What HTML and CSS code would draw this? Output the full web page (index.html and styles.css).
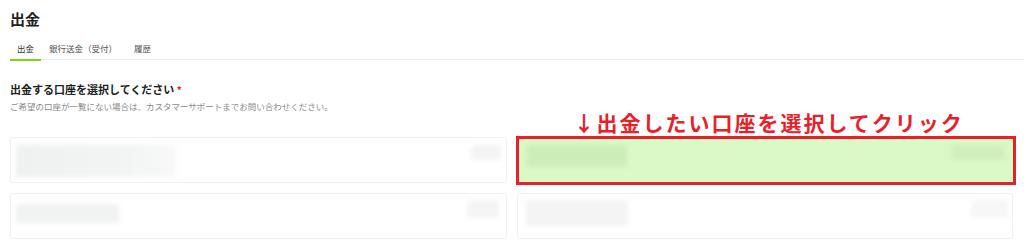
FILE: index.html
```html
<!DOCTYPE html>
<html lang="ja">
<head>
<meta charset="utf-8">
<title>出金</title>
<link rel="stylesheet" href="styles.css">
</head>
<body>
<h1 class="title">出金</h1>
<nav class="tabs">
  <span class="tab active">出金</span>
  <span class="tab">銀行送金（受付）</span>
  <span class="tab">履歴</span>
</nav>
<section class="select">
  <h2 class="heading">出金する口座を選択してください <span class="req">*</span></h2>
  <p class="note">ご希望の口座が一覧にない場合は、カスタマーサポートまでお問い合わせください。</p>
</section>
<div class="grid">
  <div class="card">
    <div class="blk b1"></div>
    <div class="blk s1"></div>
  </div>
  <div class="card selected">
    <div class="blk b2"></div>
    <div class="blk s2"></div>
    <div class="mark"></div>
    <div class="callout">↓出金したい口座を選択してクリック</div>
  </div>
  <div class="card">
    <div class="blk b3"></div>
    <div class="blk s3"></div>
  </div>
  <div class="card">
    <div class="blk b4"></div>
    <div class="blk s4"></div>
  </div>
</div>
</body>
</html>
```

FILE: styles.css
```css
html, body {
  margin: 0;
  background: #fff;
}
body {
  padding: 0 11px 0 10px;
  font-family: "Noto Sans CJK JP", "Noto Sans", sans-serif;
  color: #222;
  height: 247px;
  overflow: hidden;
}
.title {
  margin: 9px 0 0;
  font-size: 15px;
  line-height: 20px;
  font-weight: 700;
}
.tabs {
  display: flex;
  margin: 11px -11px 0 0;
  height: 19px;
  border-bottom: 1px solid #ececec;
}
.tab {
  position: relative;
  padding: 0 7px;
  font-size: 8.5px;
  line-height: 16px;
  color: #555;
}
.tab + .tab {
  margin-left: 1px;
}
.tab:nth-child(3) {
  margin-left: 3px;
}
.tab.active {
  color: #333;
}
.tab.active::after {
  content: "";
  position: absolute;
  left: 0;
  right: 0;
  bottom: -2px;
  height: 2px;
  background: #7ed321;
}
.select {
  margin-top: 21px;
}
.heading {
  margin: 0;
  font-size: 11px;
  line-height: 16px;
  font-weight: 700;
  color: #222;
}
.req {
  color: #e8202a;
  font-size: 10px;
}
.note {
  margin: 2px 0 0;
  font-size: 8.5px;
  line-height: 12px;
  color: #8a8a8a;
}
.grid {
  margin-top: 25px;
  display: grid;
  grid-template-columns: 1fr 1fr;
  gap: 10px;
}
.card {
  position: relative;
  height: 44px;
  border: 1px solid #f1f1f1;
  border-radius: 2px;
  background: #fff;
  display: flex;
  justify-content: space-between;
  align-items: flex-start;
  padding: 0 5px;
}
.card.selected {
  background: #dbf9c6;
  border-color: #dbf9c6;
}
.blk {
  background: #f1f1f1;
  filter: blur(2px);
}
.b1 { width: 160px; height: 32px; margin-top: 7px; background: linear-gradient(90deg, #eff0f0, #f3f4f4 70%, #f9f9f9); }
.s1 { width: 30px; height: 15px; margin-top: 7px; background: #f4f4f4; }
.b2 { width: 100px; height: 22px; margin: 7px 0 0 4px; background: #cdedb8; }
.s2 { width: 54px; height: 15px; margin: 7px 2px 0 0; background: #d1eebd; }
.b3 { width: 103px; height: 19px; margin-top: 10px; background: #f1f2f2; }
.s3 { width: 32px; height: 18px; margin: 6px 2px 0 0; background: #f5f5f5; }
.b4 { width: 102px; height: 26px; margin: 6px 0 0 3px; background: #f4f4f4; }
.s4 { width: 38px; height: 18px; margin: 6px -2px 0 0; background: #f7f7f7; }
.mark {
  position: absolute;
  left: -2px;
  top: -2px;
  right: -4px;
  bottom: -3px;
  border: 3px solid #e8202a;
  pointer-events: none;
}
.callout {
  position: absolute;
  left: 56px;
  top: -29px;
  font-size: 21px;
  line-height: 26px;
  font-weight: 700;
  letter-spacing: 2px;
  color: #e8202a;
  white-space: nowrap;
  text-shadow: 0 0 2px #fff, 1px 1px 0 #fff, -1px -1px 0 #fff, 1px -1px 0 #fff, -1px 1px 0 #fff;
}
```
